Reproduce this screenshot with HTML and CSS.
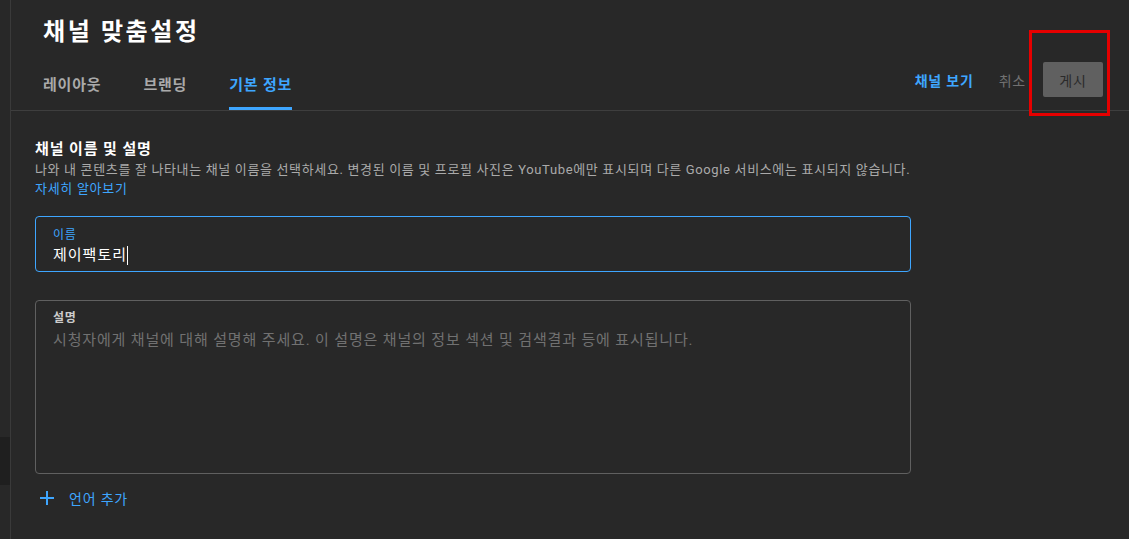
FILE: index.html
```html
<!DOCTYPE html>
<html lang="ko">
<head>
<meta charset="utf-8">
<title>채널 맞춤설정</title>
<link rel="stylesheet" href="styles.css">
</head>
<body>
<div class="app">
  <aside class="sidebar"><div class="sidebar-block"></div></aside>
  <main class="main">
    <header class="header">
      <h1 class="title">채널 맞춤설정</h1>
      <div class="tabbar">
        <nav class="tabs">
          <span class="tab">레이아웃</span>
          <span class="tab">브랜딩</span>
          <span class="tab active">기본 정보</span>
        </nav>
        <div class="actions">
          <span class="link-btn">채널 보기</span>
          <span class="cancel-btn">취소</span>
          <span class="publish-btn">게시</span>
        </div>
      </div>
      <div class="highlight"></div>
    </header>
    <section class="content">
      <h2 class="sec-title">채널 이름 및 설명</h2>
      <p class="sec-desc">나와 내 콘텐츠를 잘 나타내는 채널 이름을 선택하세요. 변경된 이름 및 프로필 사진은 YouTube에만 표시되며 다른 Google 서비스에는 표시되지 않습니다.</p>
      <a class="learn">자세히 알아보기</a>
      <div class="field focused">
        <div class="field-label">이름</div>
        <div class="field-value">제이팩토리<span class="caret"></span></div>
      </div>
      <div class="field textarea">
        <div class="field-label">설명</div>
        <div class="field-placeholder">시청자에게 채널에 대해 설명해 주세요. 이 설명은 채널의 정보 섹션 및 검색결과 등에 표시됩니다.</div>
      </div>
      <div class="add-lang">
        <svg class="plus" width="14" height="14" viewBox="0 0 14 14"><path d="M7 0v14M0 7h14" stroke="#3ea6ff" stroke-width="2"/></svg>
        <span>언어 추가</span>
      </div>
    </section>
  </main>
</div>
</body>
</html>
```

FILE: styles.css
```css
* { box-sizing: border-box; }
html, body { margin: 0; padding: 0; }
body {
  background: #282828;
  font-family: Roboto, "Noto Sans CJK KR", sans-serif;
  color: #fff;
  width: 1129px;
  height: 539px;
  overflow: hidden;
}
.app { display: flex; height: 539px; }
.sidebar {
  width: 11px;
  flex: none;
  border-right: 1px solid #3a3a3a;
  background: #282828;
  padding-top: 437px;
}
.sidebar-block { height: 48px; background: #1f1f1f; }
.main { flex: 1; position: relative; }
.header {
  border-bottom: 1px solid #3e3e3e;
  height: 111px;
  display: flex;
  flex-direction: column;
}
.title {
  margin: 15px 0 0 32px;
  font-size: 24px;
  font-weight: 700;
  line-height: 34px;
  letter-spacing: 2.6px;
}
.tabbar {
  margin-top: 13px;
  display: flex;
  justify-content: space-between;
  align-items: flex-start;
  padding: 0 26px 0 32px;
}
.tabs { display: flex; gap: 42px; margin-top: 12px; }
.tab {
  font-size: 15px;
  font-weight: 700;
  color: #aaaaaa;
  line-height: 22px;
  padding-bottom: 11px;
  border-bottom: 3px solid transparent;
  letter-spacing: 0.8px;
}
.tab.active { color: #3ea6ff; border-bottom-color: #3ea6ff; }
.actions { display: flex; align-items: center; }
.link-btn {
  color: #3ea6ff;
  font-size: 14px;
  font-weight: 700;
  margin-right: 25px;
  letter-spacing: 0.8px;
}
.cancel-btn { color: #717171; font-size: 14px; margin-right: 17px; letter-spacing: 0.8px; }
.publish-btn {
  background: #606060;
  color: #2a2a2a;
  font-size: 14px;
  width: 60px;
  height: 35px;
  border-radius: 2px;
  display: flex;
  align-items: center;
  justify-content: center;
  letter-spacing: 0.8px;
}
.highlight {
  position: absolute;
  left: 1018px;
  top: 30px;
  width: 81px;
  height: 86px;
  border: 3px solid #e60000;
}
.content { padding: 27px 0 0 24px; }
.sec-title {
  margin: 0;
  font-size: 15px;
  font-weight: 700;
  line-height: 22px;
  letter-spacing: 0.9px;
}
.sec-desc {
  margin: 0;
  font-size: 13px;
  color: #aaaaaa;
  line-height: 20px;
  letter-spacing: 0.65px;
}
.learn {
  display: block;
  color: #3ea6ff;
  font-size: 13px;
  line-height: 18px;
  letter-spacing: 0.7px;
}
.field {
  width: 876px;
  border: 1px solid #606060;
  border-radius: 4px;
  padding: 9px 17px 0;
}
.field.focused {
  margin-top: 18px;
  height: 56px;
  border-color: #3ea6ff;
}
.field-label { font-size: 12px; line-height: 18px; color: #aaaaaa; letter-spacing: 0.6px; }
.focused .field-label { color: #3ea6ff; }
.field-value {
  font-size: 15px;
  line-height: 22px;
  margin-top: 0;
  display: flex;
  align-items: center;
  letter-spacing: 1px;
}
.caret { display: inline-block; width: 1px; height: 19px; background: #fff; margin-left: 0; }
.field.textarea { margin-top: 28px; height: 174px; padding-top: 8px; }
.textarea .field-label { color: #cccccc; font-weight: 700; }
.field-placeholder { font-size: 15px; line-height: 22px; color: #717171; margin-top: 2px; letter-spacing: 0.85px; }
.add-lang {
  display: flex;
  align-items: center;
  gap: 15px;
  margin: 14px 0 0 5px;
  color: #3ea6ff;
  font-size: 14px;
  letter-spacing: 0.8px;
}
.plus { flex: none; }
```
